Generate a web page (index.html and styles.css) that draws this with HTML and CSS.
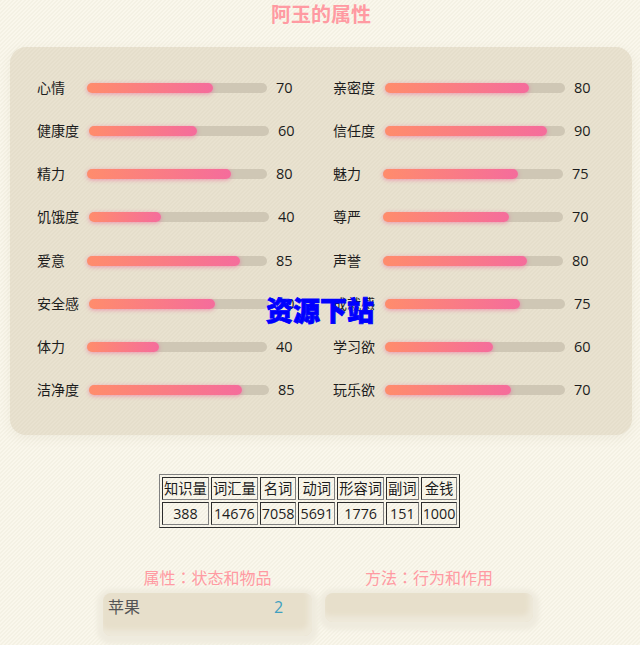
FILE: index.html
```html
<!DOCTYPE html>
<html lang="zh">
<head>
<meta charset="utf-8">
<title>阿玉的属性</title>
<link rel="stylesheet" href="styles.css">
</head>
<body>
<h1 class="title">阿玉的属性</h1>
<section class="panel">
  <div class="stat"><span class="label">心情</span><div class="track"><div class="fill" style="width:70%"></div></div><span class="value">70</span></div>
  <div class="stat"><span class="label">亲密度</span><div class="track"><div class="fill" style="width:80%"></div></div><span class="value">80</span></div>
  <div class="stat"><span class="label">健康度</span><div class="track"><div class="fill" style="width:60%"></div></div><span class="value">60</span></div>
  <div class="stat"><span class="label">信任度</span><div class="track"><div class="fill" style="width:90%"></div></div><span class="value">90</span></div>
  <div class="stat"><span class="label">精力</span><div class="track"><div class="fill" style="width:80%"></div></div><span class="value">80</span></div>
  <div class="stat"><span class="label">魅力</span><div class="track"><div class="fill" style="width:75%"></div></div><span class="value">75</span></div>
  <div class="stat"><span class="label">饥饿度</span><div class="track"><div class="fill" style="width:40%"></div></div><span class="value">40</span></div>
  <div class="stat"><span class="label">尊严</span><div class="track"><div class="fill" style="width:70%"></div></div><span class="value">70</span></div>
  <div class="stat"><span class="label">爱意</span><div class="track"><div class="fill" style="width:85%"></div></div><span class="value">85</span></div>
  <div class="stat"><span class="label">声誉</span><div class="track"><div class="fill" style="width:80%"></div></div><span class="value">80</span></div>
  <div class="stat"><span class="label">安全感</span><div class="track"><div class="fill" style="width:70%"></div></div><span class="value">70</span></div>
  <div class="stat"><span class="label">成就感</span><div class="track"><div class="fill" style="width:75%"></div></div><span class="value">75</span></div>
  <div class="stat"><span class="label">体力</span><div class="track"><div class="fill" style="width:40%"></div></div><span class="value">40</span></div>
  <div class="stat"><span class="label">学习欲</span><div class="track"><div class="fill" style="width:60%"></div></div><span class="value">60</span></div>
  <div class="stat"><span class="label">洁净度</span><div class="track"><div class="fill" style="width:85%"></div></div><span class="value">85</span></div>
  <div class="stat"><span class="label">玩乐欲</span><div class="track"><div class="fill" style="width:70%"></div></div><span class="value">70</span></div>
  <div class="watermark">资源下站</div>
</section>
<div class="table-wrap">
  <table class="words" border="1">
    <tr><td>知识量</td><td>词汇量</td><td>名词</td><td>动词</td><td>形容词</td><td>副词</td><td>金钱</td></tr>
    <tr><td>388</td><td>14676</td><td>7058</td><td>5691</td><td>1776</td><td>151</td><td>1000</td></tr>
  </table>
</div>
<div class="lists">
  <div class="list list-left">
    <h2 class="list-title" lang="zh-Hant">属性：状态和物品</h2>
    <div class="card card-tall"><span class="item">苹果</span><span class="count">2</span></div>
  </div>
  <div class="list list-right">
    <h2 class="list-title" lang="zh-Hant">方法：行为和作用</h2>
    <div class="card"></div>
  </div>
</div>
</body>
</html>
```
FILE: styles.css
```css
html, body { height: 100%; }
body {
  margin: 0;
  overflow: hidden;
  font-family: "Open Sans", "Noto Sans CJK SC", sans-serif;
  font-size: 14px;
  color: #1c1c1c;
  background-color: #faf7ec;
  background-image: linear-gradient(135deg, #f4f1e4 25%, #faf7ec 25%, #faf7ec 50%, #f4f1e4 50%, #f4f1e4 75%, #faf7ec 75%);
  background-size: 4px 4px;
}
.title {
  margin: 0;
  height: 47px;
  padding: 1px 0 0 2px;
  box-sizing: border-box;
  text-align: center;
  font-size: 20px;
  line-height: 28px;
  font-weight: 700;
  color: #ff9aa2;
}
.panel {
  position: relative;
  box-sizing: border-box;
  width: 622px;
  height: 388px;
  margin-left: 10px;
  padding: 27px 27px 0;
  display: grid;
  grid-template-columns: 296px 1fr;
  grid-auto-rows: 28px;
  row-gap: 15.15px;
  border-radius: 16px;
  background-color: #e7e0cd;
  background-image: linear-gradient(135deg, #e5decb 25%, #e9e2d0 25%, #e9e2d0 50%, #e5decb 50%, #e5decb 75%, #e9e2d0 75%);
  background-size: 4px 4px;
  box-shadow: 0 3px 12px rgba(120, 100, 60, 0.07);
}
.stat { display: flex; align-items: center; gap: 10px; }
.label { min-width: 40px; line-height: 28px; }
.track {
  width: 180px;
  height: 10px;
  border-radius: 5px;
  background: #cfc7b5;
}
.fill {
  height: 100%;
  border-radius: 5px;
  background: linear-gradient(90deg, #ff8c6c, #f56c9c);
  box-shadow: 0 1px 4px rgba(240, 90, 150, 0.55);
}
.value { margin-left: -1px; font-size: 14.5px; line-height: 28px; }
.watermark {
  position: absolute;
  left: 256px;
  top: 248px;
  font-size: 27px;
  line-height: 32px;
  font-weight: 900;
  color: #0000ff;
  -webkit-text-stroke: 0.8px #0000ff;
  white-space: nowrap;
}
.table-wrap { padding: 39px 0 0 159px; }
.words { font-size: 14.3px; color: #1c1c1c; text-align: center; }
.words td { padding: 1px; line-height: 19px; }
.lists {
  display: flex;
  gap: 13px;
  margin: 38px 0 0 103px;
}
.list { display: flex; flex-direction: column; }
.list-left { width: 209px; }
.list-right { width: 208px; }
.list-title {
  margin: 0 0 5px;
  font-family: "Noto Sans CJK TC", sans-serif;
  font-size: 16px;
  line-height: 22px;
  font-weight: 400;
  text-align: center;
  color: #ff9aa2;
}
.card {
  height: 29px;
  box-sizing: border-box;
  display: flex;
  align-items: flex-start;
  border-radius: 8px;
  background: #e7dfcb;
  box-shadow: 0 2px 4px 6px #efebde, inset -3px -5px 5px 1px #eee9da;
}
.card-tall { height: 43px; padding: 2px 0 0 5px; }
.item { width: 166px; font-size: 16px; line-height: 24px; color: #555; }
.count { font-size: 16px; line-height: 24px; color: #3fa0c0; }
```
